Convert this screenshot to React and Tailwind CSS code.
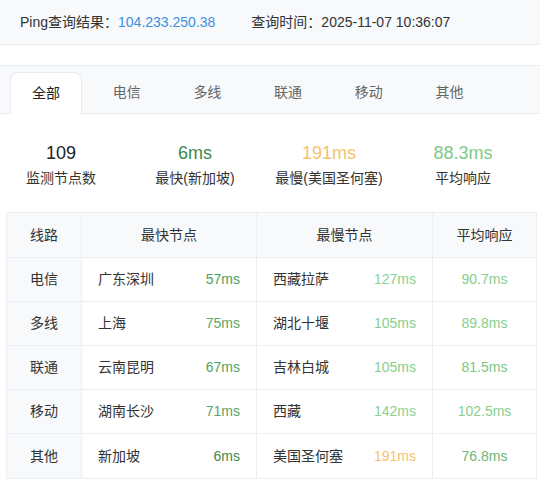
import React from "react";

const font = { fontFamily: '"Liberation Sans", "Noto Sans CJK SC", sans-serif' };

const tabs = ["全部", "电信", "多线", "联通", "移动", "其他"];

const rows = [
  { line: "电信", fast: "广东深圳", fastMs: "57ms", fastC: "text-[#4f9e5a]", slow: "西藏拉萨", slowMs: "127ms", slowC: "text-[#8bd18f]", avg: "90.7ms", avgC: "text-[#86cf8b]" },
  { line: "多线", fast: "上海", fastMs: "75ms", fastC: "text-[#5aa865]", slow: "湖北十堰", slowMs: "105ms", slowC: "text-[#86cf8b]", avg: "89.8ms", avgC: "text-[#86cf8b]" },
  { line: "联通", fast: "云南昆明", fastMs: "67ms", fastC: "text-[#55a360]", slow: "吉林白城", slowMs: "105ms", slowC: "text-[#86cf8b]", avg: "81.5ms", avgC: "text-[#7cc784]" },
  { line: "移动", fast: "湖南长沙", fastMs: "71ms", fastC: "text-[#58a663]", slow: "西藏", slowMs: "142ms", slowC: "text-[#8bd18f]", avg: "102.5ms", avgC: "text-[#88d08c]" },
  { line: "其他", fast: "新加坡", fastMs: "6ms", fastC: "text-[#3f8a4a]", slow: "美国圣何塞", slowMs: "191ms", slowC: "text-[#f5c26d]", avg: "76.8ms", avgC: "text-[#6bb874]" },
];

export default function App() {
  return (
    <div style={font} className="w-[540px] h-[483px] bg-white overflow-hidden text-[#333]">
      <div className="h-[45px] bg-[#f7f9fb] border-b border-[#e8ebef] flex items-center pl-[20px] text-[14px]">
        <span>Ping查询结果：</span>
        <span className="text-[#3e8fe0]">104.233.250.38</span>
        <span className="ml-[36px]">查询时间：2025-11-07 10:36:07</span>
      </div>
      <div className="mt-[20px] h-[49px] bg-[#f7f9fb] border-t border-b border-[#e8ebef] flex items-end pl-[10px] gap-[8.7px]">
        {tabs.map((t, i) =>
          i === 0 ? (
            <div key={t} className="w-[72px] h-[42px] bg-white border border-b-0 border-[#e8ebef] rounded-t-[8px] flex items-center justify-center text-[14px] text-[#222] -mb-px">
              {t}
            </div>
          ) : (
            <div key={t} className="w-[72px] h-[42px] flex items-center justify-center text-[14px] text-[#666]">
              {t}
            </div>
          )
        )}
      </div>
      <div className="grid grid-cols-4 gap-3 w-[524px] mt-[27px]">
        {[
          ["109", "text-[#222]", "监测节点数"],
          ["6ms", "text-[#3f8a4a]", "最快(新加坡)"],
          ["191ms", "text-[#f5c26d]", "最慢(美国圣何塞)"],
          ["88.3ms", "text-[#7ccb85]", "平均响应"],
        ].map(([v, c, l]) => (
          <div key={l} className="flex flex-col items-center">
            <div className={`text-[18px] leading-[24px] ${c}`}>{v}</div>
            <div className="text-[14px] leading-[20px] mt-[3px] text-[#333]">{l}</div>
          </div>
        ))}
      </div>
      <div className="ml-[6px] mt-[24px] w-[531px] border border-[#ebeef2] text-[14px]">
        <div className="grid grid-cols-[75px_175px_176px_1fr] h-[45px] bg-[#f7f9fb] border-b border-[#ebeef2]">
          <div className="flex items-center justify-center border-r border-[#ebeef2]">线路</div>
          <div className="flex items-center justify-center border-r border-[#ebeef2]">最快节点</div>
          <div className="flex items-center justify-center border-r border-[#ebeef2]">最慢节点</div>
          <div className="flex items-center justify-center">平均响应</div>
        </div>
        {rows.map((r, i) => (
          <div key={r.line} className={`grid grid-cols-[75px_175px_176px_1fr] h-[44px] ${i < rows.length - 1 ? "border-b border-[#ebeef2]" : ""}`}>
            <div className="flex items-center justify-center bg-[#f7f9fb] border-r border-[#ebeef2]">{r.line}</div>
            <div className="flex items-center justify-between px-[16px] border-r border-[#ebeef2]">
              <span>{r.fast}</span>
              <span className={r.fastC}>{r.fastMs}</span>
            </div>
            <div className="flex items-center justify-between px-[16px] border-r border-[#ebeef2]">
              <span>{r.slow}</span>
              <span className={r.slowC}>{r.slowMs}</span>
            </div>
            <div className={`flex items-center justify-center ${r.avgC}`}>{r.avg}</div>
          </div>
        ))}
      </div>
    </div>
  );
}
